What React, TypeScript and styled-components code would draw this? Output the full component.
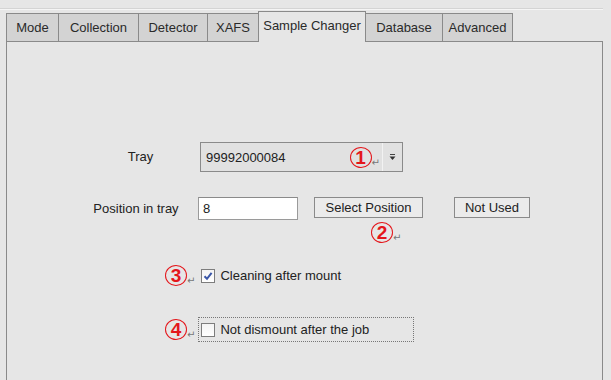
import styled, { createGlobalStyle } from "styled-components";

const GlobalStyle = createGlobalStyle`
  html, body {
    margin: 0;
    padding: 0;
    background: #e6e6e6;
    overflow: hidden;
  }
  body {
    font-family: "Liberation Sans", Arial, sans-serif;
    font-size: 13px;
    color: #222;
  }
`;

const Page = styled.div`
  width: 611px;
  height: 380px;
  overflow: hidden;
`;

const TopRule = styled.div`
  margin: 8px 8px 1px 0;
  border-top: 1px solid #d4d4d4;
  border-bottom: 1px solid #f5f5f5;
`;

const TabBar = styled.div`
  display: flex;
  align-items: flex-end;
  margin-left: 6px;
`;

const Tab = styled.div<{ $w: number; $active?: boolean; $last?: boolean }>`
  box-sizing: border-box;
  width: ${(p) => p.$w + (p.$last ? 1 : 0)}px;
  height: ${(p) => (p.$active ? 31 : 28)}px;
  margin-bottom: ${(p) => (p.$active ? -1 : 0)}px;
  position: relative;
  z-index: ${(p) => (p.$active ? 1 : 0)};
  display: flex;
  align-items: center;
  justify-content: center;
  padding-bottom: ${(p) => (p.$active ? 3 : 0)}px;
  background: ${(p) => (p.$active ? "#e6e6e6" : "#d3d3d3")};
  border-top: 1px solid #8a8a8a;
  border-left: 1px solid #8a8a8a;
  border-right: ${(p) => (p.$last || p.$active ? "1px solid #8a8a8a" : "none")};
  margin-right: ${(p) => (p.$active ? -1 : 0)}px;
  color: #2a2a2a;
  white-space: nowrap;
`;

const Panel = styled.div`
  box-sizing: border-box;
  margin-left: 6px;
  width: 597px;
  height: 360px;
  border: 1px solid #8a8a8a;
  padding-top: 100px;
`;

const FormRow = styled.div<{ $top?: number }>`
  display: flex;
  align-items: flex-start;
  padding-left: 73px;
  margin-top: ${(p) => p.$top ?? 0}px;
`;

const Label = styled.div<{ $h: number; $dx?: number }>`
  box-sizing: border-box;
  width: 118px;
  height: ${(p) => p.$h}px;
  line-height: ${(p) => p.$h}px;
  text-align: center;
  padding-left: ${(p) => Math.max(0, p.$dx ?? 0)}px;
  padding-right: ${(p) => Math.max(0, -(p.$dx ?? 0))}px;
  white-space: nowrap;
`;

const Combo = styled.div`
  box-sizing: border-box;
  margin-left: 2px;
  width: 203px;
  height: 30px;
  display: flex;
  align-items: center;
  background: #e1e1e1;
  border: 1px solid #8a8a8a;
`;

const ComboText = styled.span`
  flex: 1;
  padding-left: 5px;
`;

const ComboArrow = styled.div`
  width: 19px;
  align-self: stretch;
  display: flex;
  align-items: center;
  justify-content: center;
  border-left: 1px solid #f2f2f2;
  margin-left: 2px;
`;

const TextField = styled.div`
  box-sizing: border-box;
  width: 100px;
  height: 23px;
  line-height: 21px;
  padding-left: 4px;
  background: #fff;
  border: 1px solid #9a9a9a;
  border-top-color: #8a8a8a;
`;

const ButtonStack = styled.div<{ $gap: number }>`
  display: flex;
  flex-direction: column;
  align-items: flex-start;
  margin-left: ${(p) => p.$gap}px;
`;

const Button = styled.button<{ $w: number }>`
  box-sizing: border-box;
  width: ${(p) => p.$w}px;
  height: 21px;
  padding: 0;
  font: inherit;
  color: #222;
  background: #ebebeb;
  border: 1px solid #8a8a8a;
`;

const Mark = styled.div<{ $ml?: number; $mt?: number }>`
  display: flex;
  align-items: flex-end;
  margin-left: ${(p) => p.$ml ?? 0}px;
  margin-top: ${(p) => p.$mt ?? 0}px;
`;

const Circle = styled.span`
  box-sizing: border-box;
  width: 22px;
  height: 21px;
  border: 1.2px solid #e4161b;
  border-radius: 50%;
  color: #e4161b;
  font-size: 19px;
  font-weight: bold;
  line-height: 20px;
  text-align: center;
`;

const Return = styled.span`
  font-family: "DejaVu Sans", sans-serif;
  font-size: 10px;
  line-height: 9px;
  color: #777;
  margin-bottom: 1px;
`;

const CheckRow = styled.div<{ $top: number }>`
  display: flex;
  align-items: center;
  height: 25px;
  padding-left: 158px;
  margin-top: ${(p) => p.$top}px;
`;

const CheckLabel = styled.label<{ $focused?: boolean }>`
  box-sizing: border-box;
  height: 25px;
  width: ${(p) => (p.$focused ? "216px" : "auto")};
  margin-left: 3px;
  padding: 0 4px 0 2px;
  display: flex;
  align-items: center;
  gap: 5px;
  border: 1px dotted ${(p) => (p.$focused ? "#777" : "transparent")};
`;

const Box = styled.span`
  box-sizing: border-box;
  width: 14px;
  height: 14px;
  display: flex;
  align-items: center;
  justify-content: center;
  background: linear-gradient(#f4f4f4, #ffffff);
  border: 1px solid #7d7d7d;
`;

const Annotation = ({ n, ml, mt }: { n: number; ml?: number; mt?: number }) => (
  <Mark $ml={ml} $mt={mt}>
    <Circle>{n}</Circle>
    <Return>↵</Return>
  </Mark>
);

const Checkbox = ({ checked }: { checked?: boolean }) => (
  <Box>
    {checked && (
      <svg width="10" height="10" viewBox="0 0 10 10">
        <path d="M1.5 5.2 L4 7.8 L8.6 1.8" fill="none" stroke="#3b57a8" strokeWidth="2" />
      </svg>
    )}
  </Box>
);

const tabs = [
  { label: "Mode", w: 52 },
  { label: "Collection", w: 80 },
  { label: "Detector", w: 69 },
  { label: "XAFS", w: 51 },
  { label: "Sample Changer", w: 108, active: true },
  { label: "Database", w: 77 },
  { label: "Advanced", w: 70, last: true },
];

export default function App() {
  return (
    <Page>
      <GlobalStyle />
      <TopRule />
      <TabBar>
        {tabs.map((t) => (
          <Tab key={t.label} $w={t.w} $active={t.active} $last={t.last}>
            {t.label}
          </Tab>
        ))}
      </TabBar>
      <Panel>
        <FormRow>
          <Label $h={30} $dx={3}>Tray</Label>
          <Combo>
            <ComboText>99992000084</ComboText>
            <Annotation n={1} />
            <ComboArrow>
              <svg width="7" height="8" viewBox="0 0 7 8">
                <path d="M1 1.5 H6" stroke="#444" strokeWidth="1" />
                <path d="M0.5 3.5 H6.5 L3.5 7 Z" fill="#333" />
              </svg>
            </ComboArrow>
          </Combo>
        </FormRow>

        <FormRow $top={25}>
          <Label $h={23} $dx={-6}>Position in tray</Label>
          <TextField>8</TextField>
          <ButtonStack $gap={16}>
            <Button $w={109}>Select Position</Button>
            <Annotation n={2} ml={57} mt={4} />
          </ButtonStack>
          <ButtonStack $gap={31}>
            <Button $w={76}>Not Used</Button>
          </ButtonStack>
        </FormRow>

        <CheckRow $top={20}>
          <Annotation n={3} />
          <CheckLabel>
            <Checkbox checked />
            Cleaning after mount
          </CheckLabel>
        </CheckRow>

        <CheckRow $top={29}>
          <Annotation n={4} />
          <CheckLabel $focused>
            <Checkbox />
            Not dismount after the job
          </CheckLabel>
        </CheckRow>
      </Panel>
    </Page>
  );
}
